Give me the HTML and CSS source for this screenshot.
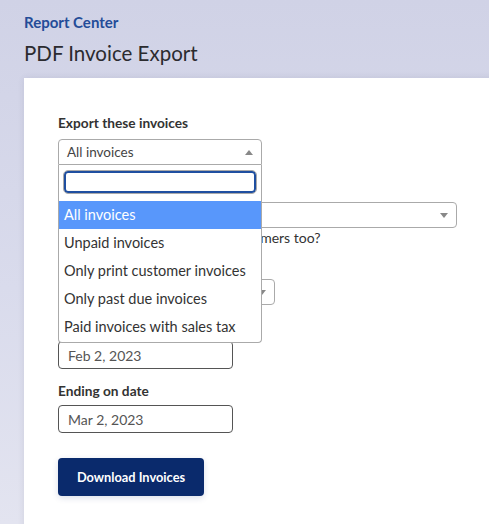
FILE: index.html
```html
<!DOCTYPE html>
<html>
<head>
<meta charset="utf-8">
<link rel="stylesheet" href="styles.css">
</head>
<body>
<header class="page-head">
  <div class="crumb">Report Center</div>
  <h1 class="title">PDF Invoice Export</h1>
</header>
<main class="card">
  <form class="form">
    <div class="field f1">
      <label class="label">Export these invoices</label>
      <div class="select-wrap">
        <div class="select open">
          <span>All invoices</span>
          <span class="arrow up"></span>
        </div>
        <div class="dropdown">
          <div class="search-box"><input class="search" type="text"></div>
          <ul class="options">
            <li class="opt active">All invoices</li>
            <li class="opt">Unpaid invoices</li>
            <li class="opt">Only print customer invoices</li>
            <li class="opt">Only past due invoices</li>
            <li class="opt">Paid invoices with sales tax</li>
          </ul>
        </div>
      </div>
    </div>
    <div class="field f2">
      <label class="label covered">Customer</label>
      <div class="select wide"><span class="arrow"></span></div>
      <div class="help"><span class="covered">Include invoices of inactive custo</span>mers too?</div>
    </div>
    <div class="field f3">
      <label class="label covered">Sort by</label>
      <div class="select mid"><span class="covered">Invoice number</span><span class="arrow"></span></div>
    </div>
    <div class="field f4">
      <label class="label covered">Starting on date</label>
      <div class="input">Feb 2, 2023</div>
    </div>
    <div class="field f5">
      <label class="label">Ending on date</label>
      <div class="input">Mar 2, 2023</div>
    </div>
    <button class="btn" type="button">Download Invoices</button>
  </form>
</main>
</body>
</html>
```

FILE: styles.css
```css
* { box-sizing: border-box; }
html, body { margin: 0; padding: 0; }
body {
  width: 489px;
  height: 524px;
  overflow: hidden;
  font-family: "Lato", "Open Sans", sans-serif;
  color: #333;
  background: linear-gradient(180deg, #d0d2e6 0%, #d9dbec 55%, #e3e4f0 100%);
}
.page-head {
  padding: 14px 24px 0;
  height: 78px;
}
.crumb {
  font-size: 15px;
  font-weight: 700;
  color: #244c98;
  line-height: 17px;
}
.title {
  margin: 9px 0 0;
  font-size: 20.5px;
  font-weight: 400;
  color: #2b2b2f;
  line-height: 26px;
}
.card {
  margin-left: 24px;
  width: 480px;
  height: 460px;
  background: #fff;
  box-shadow: 0 0 6px rgba(60, 60, 100, 0.12);
  padding: 37px 34px 0;
}
.form { display: flex; flex-direction: column; align-items: flex-start; }
.field { display: flex; flex-direction: column; align-items: flex-start; }
.label {
  font-size: 13.7px;
  font-weight: 700;
  color: #333;
  line-height: 16px;
  margin-bottom: 8px;
}
.covered { visibility: hidden; }
.select-wrap { position: relative; }
.select {
  display: flex;
  align-items: center;
  justify-content: space-between;
  height: 26px;
  width: 204px;
  border: 1px solid #aaa;
  border-radius: 4px;
  padding: 0 8px 0 8px;
  font-size: 13.5px;
  color: #444;
  background: #fff;
}
.select.open { border-radius: 4px 4px 0 0; }
.arrow {
  width: 0; height: 0;
  border-left: 4px solid transparent;
  border-right: 4px solid transparent;
  border-top: 5px solid #888;
}
.arrow.up { border-top: 0; border-bottom: 5px solid #888; }
.dropdown {
  position: absolute;
  left: 0;
  top: 26px;
  width: 204px;
  background: #fff;
  border: 1px solid #aaa;
  border-top: 0;
  border-radius: 0 0 4px 4px;
  z-index: 5;
}
.search-box { padding: 6px 5px 8px; }
.search {
  display: block;
  width: 100%;
  height: 22px;
  border: 2px solid #1f4fa0;
  border-radius: 4px;
  outline: 1px solid #aaa;
  outline-offset: 0;
  font: inherit;
}
.options { list-style: none; margin: 0; padding: 0 0 1px; }
.opt {
  height: 28px;
  line-height: 28px;
  padding-left: 5px;
  font-size: 14.5px;
  color: #333;
}
.opt.active { background: #5897fb; color: #fff; }
.f1 { margin-bottom: 13px; }
.wide { width: 399px; justify-content: flex-end; }
.help { font-size: 14px; line-height: 18px; margin-top: 1px; color: #333; white-space: nowrap; }
.f2 { margin-bottom: 8px; }
.mid { width: 217px; height: 26px; }
.f3 { margin-bottom: 12px; }
.input {
  width: 175px;
  height: 28px;
  border: 1px solid #555;
  border-radius: 4px;
  padding-left: 9px;
  display: flex;
  align-items: center;
  font-size: 14px;
  color: #555;
}
.f4 { margin-bottom: 14px; }
.f5 .label { margin-bottom: 6px; }
.f5 { margin-bottom: 25px; }
.btn {
  width: 146px;
  height: 38px;
  border: 0;
  border-radius: 4px;
  background: #0a2a6c;
  color: #fff;
  font-family: inherit;
  font-size: 12.8px;
  font-weight: 700;
  box-shadow: 0 2px 6px rgba(10, 42, 108, 0.15);
}
```
